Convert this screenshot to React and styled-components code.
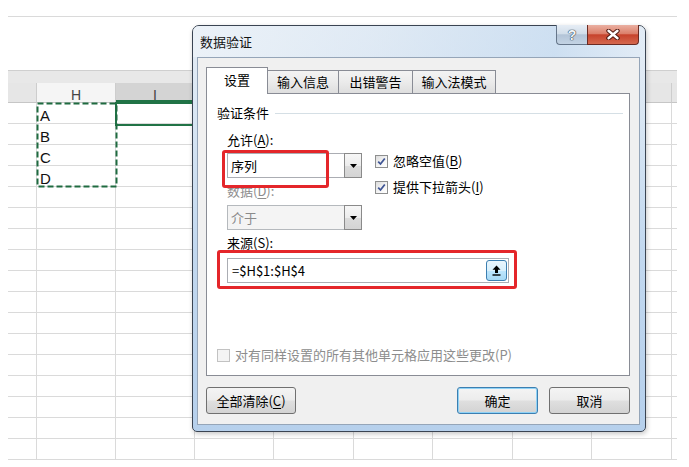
import React from "react";
import styled, { createGlobalStyle, css } from "styled-components";

const GlobalStyle = createGlobalStyle`
  html, body { margin: 0; padding: 0; background: #fff; }
  body {
    width: 689px;
    height: 467px;
    overflow: hidden;
    font-family: "Noto Sans CJK SC", "Noto Sans", sans-serif;
  }
`;

const COLS = [29, 79, 79, 79, 80, 79, 80, 79, 80, 5];
const gridCols = COLS.map((w) => `${w}px`).join(" ");
/* only H and I headers are visible; the rest sit under the dialog */
const HEADERS = ["", "H", "I", "", "", "", "", "", "", ""];
const DATA = ["A", "B", "C", "D"];
const ROWS = 17;

const Page = styled.div`
  position: relative;
  width: 689px;
  height: 467px;
  background: #fff;
`;

/* ---------- spreadsheet ---------- */
const Sheet = styled.div`
  margin-left: 8px;
  padding-top: 16px;
  width: 669px;
`;

const FormulaArea = styled.div`
  height: 53px;
  border-top: 1px solid #dadada;
  background: #fff;
`;

const RibbonStrip = styled.div`
  height: 12px;
  border-top: 1px solid #cfcfcf;
  background: #e8e8e8;
`;

const HeaderRow = styled.div`
  display: grid;
  grid-template-columns: ${gridCols};
  height: 20px;
`;

const HeaderCell = styled.div`
  box-sizing: border-box;
  height: 20px;
  padding-top: 2px;
  border-right: ${(p) => (p.$last ? "none" : "1px solid #cdcdcd")};
  border-bottom: 1px solid #c6c6c6;
  background: ${(p) =>
    p.$tone === "active" ? "#d4d4d4" : p.$tone === "light" ? "#f5f5f5" : "#e6e6e6"};
  box-shadow: ${(p) => (p.$tone === "active" ? "inset 0 -2px 0 #217346" : "none")};
  font: 14px/20px "Liberation Sans", Arial, sans-serif;
  color: #444;
  text-align: center;
`;

const BodyGrid = styled.div`
  position: relative;
  display: grid;
  grid-template-columns: ${gridCols};
  grid-auto-rows: 21px;
`;

const Cell = styled.div`
  box-sizing: border-box;
  border-right: ${(p) => (p.$last ? "none" : "1px solid #dadada")};
  border-bottom: 1px solid #dadada;
  padding: 3px 0 0 3px;
  font: 15px/20px "Liberation Sans", Arial, sans-serif;
  color: #111;
  white-space: nowrap;
`;

const Marquee = styled.svg`
  position: absolute;
  left: 28px;
  top: -1px;
  width: 82px;
  height: 86px;
  overflow: visible;
`;

const ActiveCell = styled.div`
  position: absolute;
  left: 107px;
  top: -1px;
  width: 82px;
  height: 24px;
  box-sizing: border-box;
  border: 2px solid #217346;
`;

/* ---------- dialog ---------- */
const Dialog = styled.div`
  position: absolute;
  left: 192px;
  top: 25px;
  width: 454px;
  height: 407px;
  box-sizing: border-box;
  display: flex;
  flex-direction: column;
  border: 1px solid #3a4452;
  border-radius: 7px 7px 5px 5px;
  background: linear-gradient(180deg, #e6edf5 0%, #d9e6f3 22%, #c2d8ef 55%, #b6d0ec 100%);
  box-shadow: 1px 2px 5px rgba(0, 0, 0, 0.22);
  font-family: "Noto Sans CJK SC", "Noto Sans", sans-serif;
  font-size: 13px;
  color: #000;
  z-index: 5;
`;

const TitleBar = styled.div`
  height: 31px;
  display: flex;
  align-items: flex-start;
  padding-left: 7px;
  border-radius: 6px 6px 0 0;
  background: linear-gradient(
    90deg,
    rgba(236, 242, 248, 0.9) 0%,
    rgba(220, 232, 244, 0.6) 40%,
    rgba(196, 218, 240, 0.7) 80%,
    rgba(226, 236, 246, 0.8) 100%
  );
`;

const Title = styled.div`
  line-height: 31px;
  font-size: 13px;
  color: #141414;
`;

const CaptionButtons = styled.div`
  margin-left: auto;
  margin-right: 6px;
  margin-top: -1px;
  display: flex;
`;

const HelpButton = styled.div`
  box-sizing: border-box;
  width: 31px;
  height: 20px;
  border: 1px solid #66768a;
  border-top: none;
  border-right: none;
  border-radius: 0 0 0 4px;
  background: linear-gradient(180deg, #e6edf5 0%, #d2deea 45%, #b3c4d7 52%, #c3d3e4 100%);
  display: flex;
  align-items: center;
  justify-content: center;
  font: bold 14px/1 "Liberation Sans", Arial, sans-serif;
  color: #f2f6fa;
  text-shadow: 0 0 1px #34414f, 0 0 1px #34414f, 0 0 1px #34414f;
`;

const CloseButton = styled.div`
  box-sizing: border-box;
  width: 52px;
  height: 20px;
  border: 1px solid #6b2a22;
  border-top: none;
  border-radius: 0 0 4px 0;
  background: linear-gradient(180deg, #eab0a2 0%, #dc806b 45%, #c7432c 52%, #d5684e 100%);
  display: flex;
  align-items: center;
  justify-content: center;
`;

const Client = styled.div`
  flex: 1;
  margin: 0 5px 6px 4px;
  border: 1px solid #95a5b8;
  background: #f0f0f0;
  display: flex;
  flex-direction: column;
  padding: 9px 9px 10px 8px;
`;

const TabRow = styled.div`
  display: flex;
  align-items: flex-end;
  height: 26px;
`;

const Tab = styled.div`
  box-sizing: border-box;
  width: ${(p) => p.$w}px;
  height: ${(p) => (p.$active ? 27 : 23)}px;
  margin-bottom: ${(p) => (p.$active ? -1 : 0)}px;
  padding-bottom: ${(p) => (p.$active ? 2 : 0)}px;
  border: 1px solid #898c95;
  border-bottom: none;
  ${(p) =>
    !p.$first &&
    css`
      border-left: none;
    `}
  background: ${(p) =>
    p.$active ? "#fff" : "linear-gradient(180deg, #f3f3f3 0%, #ebebeb 50%, #dedede 100%)"};
  position: relative;
  z-index: ${(p) => (p.$active ? 2 : 1)};
  display: flex;
  align-items: center;
  justify-content: center;
  font-size: 13px;
  line-height: 16px;
  white-space: nowrap;
`;

const Panel = styled.div`
  position: relative;
  flex: 1;
  box-sizing: border-box;
  border: 1px solid #898c95;
  background: #fff;
  display: flex;
  flex-direction: column;
  padding: 11px 0 12px 10px;
  margin-bottom: 11px;
`;

const GroupHeader = styled.div`
  display: flex;
  align-items: center;
  height: 16px;
  line-height: 16px;
  margin-right: 6px;
`;

const GroupLine = styled.div`
  flex: 1;
  height: 1px;
  margin-left: 6px;
  background: #d5dfe5;
`;

const Fields = styled.div`
  padding-left: 10px;
  display: flex;
  flex-direction: column;
`;

const Label = styled.div`
  height: 16px;
  line-height: 16px;
  margin-top: ${(p) => p.$mt}px;
  color: ${(p) => (p.$disabled ? "#8d8d8d" : "#000")};
`;

const ComboRow = styled.div`
  display: flex;
  margin-top: 5px;
`;

const ComboColumn = styled.div`
  display: flex;
  flex-direction: column;
`;

const Combo = styled.div`
  box-sizing: border-box;
  width: 135px;
  height: 25px;
  margin-top: ${(p) => p.$mt || 0}px;
  display: flex;
  border: 1px solid ${(p) => (p.$disabled ? "#b5b9bd" : "#abadb3")};
  background: ${(p) => (p.$disabled ? "#f4f4f4" : "#fff")};
  color: ${(p) => (p.$disabled ? "#8a8a8a" : "#000")};
`;

const ComboText = styled.div`
  flex: 1;
  padding-left: 3px;
  line-height: 23px;
  font-size: 13px;
`;

const ComboArrow = styled.div`
  box-sizing: border-box;
  width: 18px;
  margin: -1px -1px -1px 0;
  border: 1px solid #8a8a8a;
  background: linear-gradient(180deg, #f7f7f7 0%, #ececec 50%, #dcdcdc 51%, #d4d4d4 100%);
  display: flex;
  align-items: center;
  justify-content: center;
`;

const CheckColumn = styled.div`
  margin-left: 13px;
  display: flex;
  flex-direction: column;
  gap: 10px;
`;

const CheckRow = styled.div`
  display: flex;
  align-items: center;
  gap: 5px;
  height: 16px;
  line-height: 16px;
  white-space: nowrap;
  color: ${(p) => (p.$disabled ? "#8d8d8d" : "#000")};
`;

const Box = styled.span`
  box-sizing: border-box;
  flex: none;
  width: 13px;
  height: 13px;
  border: 1px solid ${(p) => (p.$disabled ? "#c2c2c2" : "#8e8f8f")};
  background: ${(p) =>
    p.$disabled ? "#f4f4f4" : "linear-gradient(135deg, #dcdcdc 0%, #f6f6f6 60%, #ffffff 100%)"};
  display: flex;
  align-items: center;
  justify-content: center;
`;

const RefInput = styled.div`
  box-sizing: border-box;
  width: 282px;
  height: 25px;
  margin-top: 7px;
  border: 1px solid #abadb3;
  background: #fff;
  display: flex;
  align-items: center;
  padding: 0 1px 0 4px;
`;

const RefText = styled.div`
  flex: 1;
  line-height: 23px;
  font-size: 13px;
`;

const RefButton = styled.div`
  box-sizing: border-box;
  width: 21px;
  height: 21px;
  border: 1px solid #3c7fb1;
  border-radius: 3px;
  background: linear-gradient(180deg, #eaf6fd 0%, #d9f0fc 50%, #bee6fd 51%, #a7d9f5 100%);
  display: flex;
  align-items: center;
  justify-content: center;
`;

const FooterCheck = styled(CheckRow)`
  margin-top: auto;
`;

const RedMark = styled.div`
  position: absolute;
  left: ${(p) => p.$x}px;
  top: ${(p) => p.$y}px;
  width: ${(p) => p.$w}px;
  height: ${(p) => p.$h}px;
  box-sizing: border-box;
  border: 3px solid #e4262a;
  border-radius: 3px;
  z-index: 4;
  pointer-events: none;
`;

const ButtonRow = styled.div`
  display: flex;
  gap: 11px;
  height: 27px;
`;

const Button = styled.button`
  box-sizing: border-box;
  width: ${(p) => p.$w}px;
  height: 27px;
  padding: 0;
  border: 1px solid #707070;
  border-radius: 3px;
  background: linear-gradient(180deg, #f4f4f4 0%, #ececec 48%, #dfdfdf 52%, #d3d3d3 100%);
  font: 13px "Noto Sans CJK SC", "Noto Sans", sans-serif;
  color: #000;
  white-space: nowrap;
  ${(p) =>
    p.$push &&
    css`
      margin-left: auto;
    `}
  ${(p) =>
    p.$default &&
    css`
      border-color: #3c7fb1;
      box-shadow: inset 0 0 0 1px #8fd2f6;
    `}
`;

const Underline = styled.u`
  text-decoration-thickness: 1px;
  text-underline-offset: 2px;
`;

const Triangle = () => (
  <svg width="7" height="4" viewBox="0 0 7 4">
    <path d="M0 0H7L3.5 4Z" fill="#000" />
  </svg>
);

const Check = () => (
  <svg width="9" height="9" viewBox="0 0 9 9">
    <path d="M1.2 4.6 L3.5 7 L7.8 1.5" fill="none" stroke="#3f5595" strokeWidth="1.8" />
  </svg>
);

const UpArrow = () => (
  <svg width="9" height="11" viewBox="0 0 9 11">
    <path d="M4.5 0.5 L8.5 4.8 H6 V8 H3 V4.8 H0.5 Z" fill="#000" />
    <rect x="0.5" y="9.3" width="8" height="1.4" fill="#000" />
  </svg>
);

const CloseGlyph = () => (
  <svg width="14" height="11" viewBox="0 0 14 11">
    <path
      d="M2.5 1.8 L11.5 9.2 M11.5 1.8 L2.5 9.2"
      stroke="#4d1810"
      strokeWidth="4.4"
      strokeLinecap="round"
    />
    <path
      d="M2.5 1.8 L11.5 9.2 M11.5 1.8 L2.5 9.2"
      stroke="#ffffff"
      strokeWidth="2.4"
      strokeLinecap="round"
    />
  </svg>
);

const headerTone = (i) => (i === 1 ? "light" : i === 2 ? "active" : "plain");

export default function App() {
  const cells = [];
  for (let r = 0; r < ROWS; r++) {
    COLS.forEach((_, c) => {
      cells.push(
        <Cell key={`${r}-${c}`} $last={c === COLS.length - 1}>
          {c === 1 && r < DATA.length ? DATA[r] : ""}
        </Cell>
      );
    });
  }

  return (
    <Page>
      <GlobalStyle />
      <Sheet>
        <FormulaArea />
        <RibbonStrip />
        <HeaderRow>
          {HEADERS.map((h, i) => (
            <HeaderCell key={i} $tone={headerTone(i)} $last={i === COLS.length - 1}>
              {h}
            </HeaderCell>
          ))}
        </HeaderRow>
        <BodyGrid>
          {cells}
          <ActiveCell />
          <Marquee viewBox="0 0 82 86">
            <rect
              x="1.5"
              y="1.5"
              width="79"
              height="83"
              fill="none"
              stroke="#1f6b40"
              strokeWidth="2"
              strokeDasharray="6 3"
            />
          </Marquee>
        </BodyGrid>
      </Sheet>

      <Dialog>
        <TitleBar>
          <Title>数据验证</Title>
          <CaptionButtons>
            <HelpButton>?</HelpButton>
            <CloseButton>
              <CloseGlyph />
            </CloseButton>
          </CaptionButtons>
        </TitleBar>
        <Client>
          <TabRow>
            <Tab $w={62} $active $first>
              设置
            </Tab>
            <Tab $w={71}>输入信息</Tab>
            <Tab $w={74}>出错警告</Tab>
            <Tab $w={83}>输入法模式</Tab>
          </TabRow>
          <Panel>
            <GroupHeader>
              <span>验证条件</span>
              <GroupLine />
            </GroupHeader>
            <Fields>
              <Label $mt={11}>
                允许(<Underline>A</Underline>):
              </Label>
              <ComboRow>
                <ComboColumn>
                  <Combo>
                    <ComboText>序列</ComboText>
                    <ComboArrow>
                      <Triangle />
                    </ComboArrow>
                  </Combo>
                  <Label $mt={5} $disabled>
                    数据(<Underline>D</Underline>):
                  </Label>
                  <Combo $mt={6} $disabled>
                    <ComboText>介于</ComboText>
                    <ComboArrow>
                      <Triangle />
                    </ComboArrow>
                  </Combo>
                </ComboColumn>
                <CheckColumn>
                  <CheckRow>
                    <Box>
                      <Check />
                    </Box>
                    <span>
                      忽略空值(<Underline>B</Underline>)
                    </span>
                  </CheckRow>
                  <CheckRow>
                    <Box>
                      <Check />
                    </Box>
                    <span>
                      提供下拉箭头(<Underline>I</Underline>)
                    </span>
                  </CheckRow>
                </CheckColumn>
              </ComboRow>
              <Label $mt={5}>
                来源(<Underline>S</Underline>):
              </Label>
              <RefInput>
                <RefText>=$H$1:$H$4</RefText>
                <RefButton>
                  <UpArrow />
                </RefButton>
              </RefInput>
            </Fields>
            <FooterCheck $disabled>
              <Box $disabled />
              <span>对有同样设置的所有其他单元格应用这些更改(P)</span>
            </FooterCheck>
            <RedMark $x={15} $y={56} $w={107} $h={38} />
            <RedMark $x={10} $y={156} $w={300} $h={39} />
          </Panel>
          <ButtonRow>
            <Button $w={90}>
              全部清除(<Underline>C</Underline>)
            </Button>
            <Button $w={81} $push $default>
              确定
            </Button>
            <Button $w={81}>取消</Button>
          </ButtonRow>
        </Client>
      </Dialog>
    </Page>
  );
}
